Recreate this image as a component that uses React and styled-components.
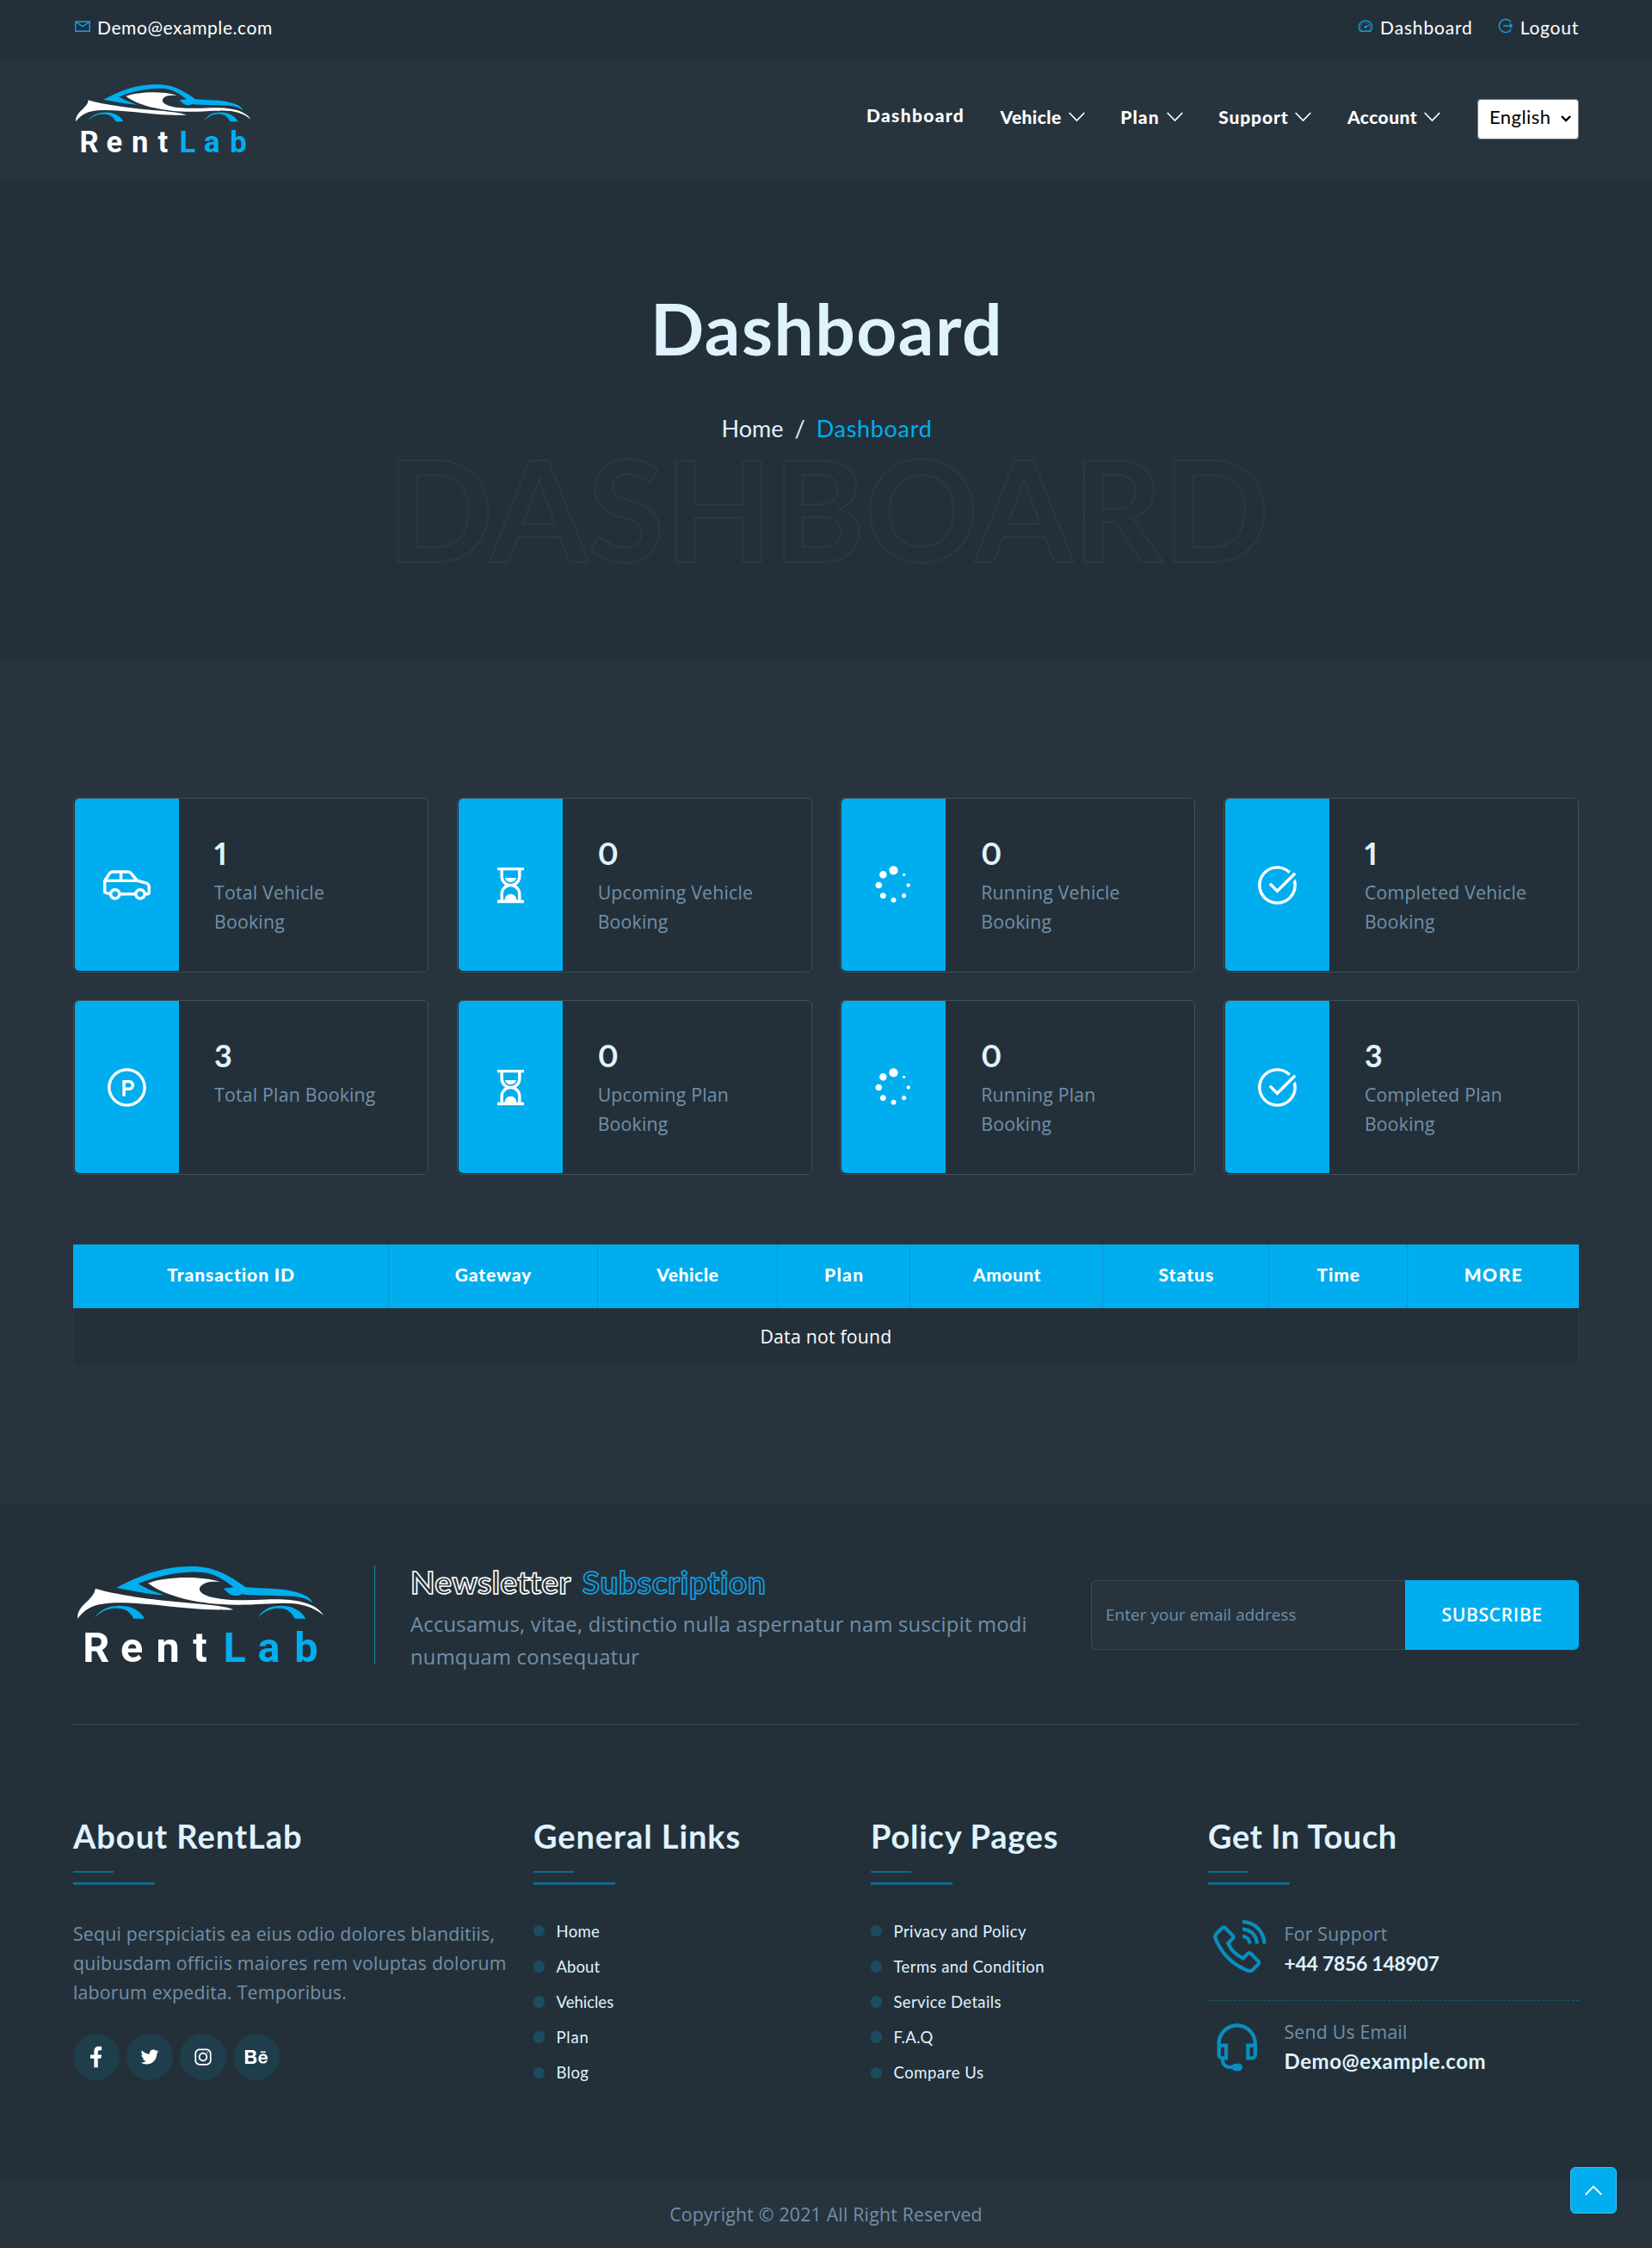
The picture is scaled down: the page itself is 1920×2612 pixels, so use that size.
import React from "react";
import styled, { createGlobalStyle } from "styled-components";
import {
  LiaBehance,
  LiaCarSideSolid,
  LiaCheckCircle,
  LiaEnvelope,
  LiaFacebookF,
  LiaHeadsetSolid,
  LiaHourglassHalfSolid,
  LiaInstagram,
  LiaPhoneVolumeSolid,
  LiaProductHunt,
  LiaSignOutAltSolid,
  LiaSpinnerSolid,
  LiaTachometerAltSolid,
  LiaTwitter,
} from "react-icons/lia";

const c = {
  dark: "#243039",
  light: "#28343d",
  blue: "#00aeef",
  heading: "#dff3ff",
  body: "#7190aa",
  line: "#3c4a53",
};

const headingFont = `Lato, "Open Sans", sans-serif`;
const bodyFont = `"Open Sans", "Noto Sans", sans-serif`;

const GlobalStyle = createGlobalStyle`
  *, *::before, *::after { box-sizing: border-box; }
  body {
    margin: 0;
    background: ${c.light};
    color: ${c.body};
    font: 400 21.25px/34px ${bodyFont};
    letter-spacing: 0.22px;
  }
  a { color: inherit; text-decoration: none; }
  ul { list-style: none; margin: 0; padding: 0; }
  h1, h2, h3, p { margin: 0; }
  svg { display: block; flex: none; }
`;

const Page = styled.div`
  position: relative;
  width: 1920px;
  height: 2612px;
  overflow: hidden;
`;

const Container = styled.div`
  width: 1750px;
  margin: 0 auto;
`;

/* ---------- Top bar ---------- */

const TopBar = styled.div`
  height: 69px;
  background: ${c.dark};
`;

const TopBarInner = styled(Container)`
  display: flex;
  justify-content: space-between;
  align-items: center;
  height: 100%;
  padding-bottom: 5px;
`;

const TopLinks = styled.div`
  display: flex;
  gap: 27px;
`;

const TopLink = styled.a`
  display: flex;
  align-items: center;
  gap: 6px;
  color: #fff;
  font: 400 21px/30px ${headingFont};
  letter-spacing: ${(p) => p.$spacing}px;

  svg {
    width: 22px;
    height: 22px;
    margin-top: -5px;
    color: #0fa3ea;
  }
`;

/* ---------- Header ---------- */

const Header = styled.header`
  height: 138px;
  background: ${c.light};
`;

const HeaderInner = styled(Container)`
  display: flex;
  align-items: center;
  height: 100%;
`;

const Brand = styled.a`
  margin-left: 3px;
`;

const Nav = styled.nav`
  display: flex;
  align-items: center;
  gap: 41.5px;
  margin: 0 43px 0 auto;
`;

const NavItem = styled.a`
  display: flex;
  align-items: center;
  gap: 8px;
  padding-bottom: ${(p) => (p.$menu ? 4 : 8)}px;
  color: #fff;
  font: 900 21px/30px ${headingFont};
  letter-spacing: ${(p) => p.$spacing}px;
`;

const LanguageSelect = styled.button`
  display: flex;
  align-items: center;
  justify-content: space-between;
  width: 118px;
  height: 47px;
  padding: 0 8px 4px 13px;
  border: 1px solid #767676;
  border-radius: 4px;
  background: #fff;
  color: #000;
  font: 400 22px/30px ${headingFont};
  letter-spacing: 0.45px;

  svg { margin-top: 4px; }
`;

/* ---------- Hero ---------- */

const Hero = styled.section`
  height: 558px;
  padding-top: 123.5px;
  background: ${c.dark};
  text-align: center;
`;

const HeroTitle = styled.h1`
  padding-left: 2px;
  color: ${c.heading};
  font: 700 82px/100px ${headingFont};
  letter-spacing: 1.5px;
`;

const Breadcrumb = styled.div`
  display: flex;
  justify-content: center;
  gap: 13px;
  margin-top: 50px;
  padding-left: 2px;
  color: ${c.heading};
  font: 400 27px/34px ${headingFont};
`;

const Crumb = styled.span`
  color: ${(p) => (p.$current ? c.blue : "inherit")};
  letter-spacing: ${(p) => (p.$current ? 0.7 : 0)}px;
`;

const HeroGhost = styled.div`
  margin: -6px 0 0 5px;
  color: transparent;
  font: 700 163px/163px ${headingFont};
  letter-spacing: 0;
  text-transform: uppercase;
  -webkit-text-stroke: 1.8px #2c3942;
`;

/* ---------- Dashboard ---------- */

const Content = styled.main`
  height: 984px;
  padding-top: 162px;
  background: ${c.light};
`;

const StatGrid = styled.div`
  display: grid;
  grid-template-columns: repeat(4, 1fr);
  grid-auto-rows: 203px;
  gap: 32px 32.5px;
`;

const StatCard = styled.div`
  display: flex;
  padding: 0 0 1px 1px;
  border: 1px solid #434f58;
  border-radius: 6px;
  background: ${c.dark};
`;

const StatIcon = styled.div`
  display: flex;
  flex: none;
  align-items: center;
  justify-content: center;
  width: 121px;
  border-radius: 5px 0 0 5px;
  background: ${c.blue};
  color: #fff;

  svg {
    width: 55px;
    height: 55px;
  }
`;

const StatText = styled.div`
  width: 242px;
  padding: 43px 0 0 41px;
`;

const StatValue = styled.div`
  color: ${c.heading};
  font: 700 36px/40px ${headingFont};
  font-variant-numeric: proportional-nums;
`;

const StatLabel = styled.div`
  margin-top: 9px;
`;

const Table = styled.div`
  margin-top: 81px;
`;

const TableHead = styled.div`
  display: grid;
  grid-template-columns: 367.3fr 242.3fr 209.4fr 154.4fr 224fr 193fr 160.6fr 199fr;
  height: 74px;
  background: ${c.blue};
`;

const HeadCell = styled.div`
  display: flex;
  align-items: center;
  justify-content: center;
  padding: 0 0 4px 1px;
  border-right: 1px solid #0597d2;
  color: #fff;
  font: 900 21px/30px ${headingFont};
  letter-spacing: ${(p) => p.$spacing}px;

  &:last-child { border-right: 0; }
`;

const EmptyRow = styled.div`
  display: flex;
  align-items: center;
  justify-content: center;
  height: 67px;
  border: solid #2b3943;
  border-width: 0 1px 1px;
  background: ${c.dark};
  color: #fff;
`;

/* ---------- Footer ---------- */

const Footer = styled.footer`
  height: 785px;
  padding-top: 70px;
  background: ${c.dark};
`;

const Newsletter = styled.div`
  display: flex;
  align-items: flex-start;
  height: 185px;
  border-bottom: 1px solid ${c.line};
`;

const FooterLogo = styled.div`
  width: 351px;
  height: 114px;
  padding: 1px 0 0 5px;
  border-right: 1px solid #138cbe;
`;

const NewsletterText = styled.div`
  width: 725px;
  margin: -3px 0 0 41px;
`;

const NewsletterTitle = styled.h2`
  display: flex;
  gap: 13px;
  color: transparent;
  font: 700 37px/44px ${headingFont};
`;

const Outline = styled.span`
  letter-spacing: ${(p) => p.$spacing}px;
  -webkit-text-stroke: 1.6px ${(p) => p.$color};
`;

const NewsletterCopy = styled.p`
  margin-top: 8px;
  font-size: 23.75px;
  line-height: 38px;
  letter-spacing: 0.25px;
`;

const SubscribeForm = styled.div`
  display: flex;
  width: 567px;
  height: 81px;
  margin: 17px 0 0 auto;
`;

const EmailField = styled.div`
  display: flex;
  flex: 1;
  align-items: center;
  padding: 0 0 2px 16px;
  border: 1px solid ${c.line};
  border-right: 0;
  border-radius: 6px 0 0 6px;
  background: ${c.light};
  font-size: 18.75px;
  letter-spacing: 0.13px;
`;

const SubscribeButton = styled.button`
  width: 202px;
  padding: 0 0 2px;
  border: 0;
  border-radius: 0 6px 6px 0;
  background: ${c.blue};
  color: #fff;
  font: 600 21.25px/34px ${bodyFont};
  letter-spacing: 0.5px;
`;

const FooterColumns = styled.div`
  display: grid;
  grid-template-columns: 535px 392px 392px 431px;
  padding-top: 106px;
`;

const ColumnTitle = styled.h3`
  color: ${c.heading};
  font: 700 38px/46px ${headingFont};
  letter-spacing: ${(p) => p.$spacing}px;
`;

const TitleRule = styled.div`
  width: 95px;
  height: 16px;
  margin-top: 18px;
  border-bottom: 3px solid #146689;

  &::before {
    content: "";
    display: block;
    width: 47px;
    height: 2px;
    background: #146689;
  }
`;

const AboutCopy = styled.p`
  width: 515px;
  margin-top: 40px;
`;

const Socials = styled.div`
  display: flex;
  gap: 8px;
  margin-top: 31px;
`;

const Social = styled.a`
  display: flex;
  align-items: center;
  justify-content: center;
  width: 54px;
  height: 54px;
  border-radius: 50%;
  background: #1f3e4c;
  color: #fff;

  svg {
    width: 28px;
    height: 28px;
  }
`;

const LinkList = styled.ul`
  margin-top: 33px;
`;

const LinkItem = styled.li`
  display: flex;
  align-items: center;
  gap: 13.5px;
  height: 41.2px;
  color: ${c.heading};
  font: 400 18.5px/30px ${headingFont};
  letter-spacing: ${(p) => p.$spacing}px;

  &::before {
    content: "";
    width: 13px;
    height: 13.5px;
    border-radius: 6px;
    background: #1b4c60;
  }
`;

const Contact = styled.div`
  display: flex;
  gap: 21px;
  padding: ${(p) => (p.$first ? "0 0 25px" : "19px 0 0")};
  margin-top: ${(p) => (p.$first ? 40 : 0)}px;
  border-bottom: ${(p) => (p.$first ? "1px dashed #1b5870" : "0")};

  svg {
    width: 67.5px;
    height: 67.5px;
    margin-top: 1px;
    color: #098ebf;
  }
`;

const ContactValue = styled.div`
  color: ${c.heading};
  font: 700 ${(p) => p.$size}px/34px ${headingFont};
  letter-spacing: ${(p) => p.$spacing}px;
`;

const Copyright = styled.div`
  display: flex;
  align-items: center;
  justify-content: center;
  height: 78px;
  background: ${c.light};
`;

const BackToTop = styled.a`
  position: absolute;
  right: 41px;
  bottom: 40px;
  display: flex;
  align-items: center;
  justify-content: center;
  width: 54px;
  height: 54px;
  border: 1px solid #3fc3f5;
  border-radius: 6px;
  background: ${c.blue};
`;

/* ---------- Drawings ---------- */

const LogoWord = styled.text`
  font: 700 34.5px Roboto, sans-serif;
  letter-spacing: 0;
`;

function Logo({ width }) {
  return (
    <svg width={width} height={(width * 80) / 204} viewBox="0 0 204 80" overflow="visible">
      <g fill={c.blue}>
        <path d="M32.2 17.7C49 9 68 0 94.3 0C115 0 127 9 139.2 17.2C150 18.4 160 17.8 169 19C182 20.8 192 24 194.3 29.9C189 26.5 184 25 178 24.7C165 24 152 24 139 23.4C137 23 136 22.6 134.5 23.4C130 25.4 126 23.5 124 21.5C122.8 20.3 121.8 19.4 120.4 18.3L129 17.2C122 12 117 8.5 110 6.2C95 2.5 72 5.8 50.2 14.3C56 18 63 21 71.8 23.7C58 23 45 20 32.2 17.7Z" />
        <path d="M14.3 42.7C19 35 27 32.4 36 32.6C46 33 52 37 55.5 43.2L46.5 43.2C43 36 37 34.2 31 34.5C24 35 18.5 38 14.3 42.7Z" />
        <path d="M149 42.7C153.5 35 160 32.4 169 32.6C179 33 185 37 188.6 43.2L179.5 43.2C176 36 171 34.2 165 34.5C158.5 35 153 38 149 42.7Z" />
      </g>
      <g fill="#fff">
        <path d="M58.4 13.8C73 8.6 100 7.5 118 12.8C113 12.4 109 12.7 106 13.6C99 16.5 98.5 21.5 108.6 24.9C120 28.2 138 28.3 156 27.3C178 26.3 197 29.5 203.3 40.5C195 33.5 185 30.3 170 30.4C158 30.6 148 31.7 133 31.8C105 31.8 74 26 58.4 13.8Z" />
        <path d="M14.7 18.3C32 23.5 60 27.5 90 30C108 31.5 122 32.8 129 35.7C112 36.4 88 34.5 70 32.3C48 30 30 28.8 18 31.5C9 33.5 4 38 0.2 43.2C-0.5 37 4 32.5 8 29C12 25 14.5 22 14.7 18.3Z" />
      </g>
      <LogoWord x="4.5 35.5 65 95.5" y="78.7" fill="#fff">Rent</LogoWord>
      <LogoWord x="120.5 149 179.3" y="78.7" fill={c.blue}>Lab</LogoWord>
    </svg>
  );
}

const ChevronDown = () => (
  <svg width="19" height="12" viewBox="0 0 19 12" fill="none" stroke="#fff" strokeWidth="1.7">
    <path d="M0.7 1L9.5 10L18.3 1" />
  </svg>
);

const SelectArrow = () => (
  <svg width="12" height="8" viewBox="0 0 12 8" fill="none" stroke="#000" strokeWidth="2.3">
    <path d="M0.9 1L6 6.1L11.1 1" />
  </svg>
);

const ChevronUp = () => (
  <svg width="20" height="12" viewBox="0 0 20 12" fill="none" stroke="#fff" strokeWidth="1.8">
    <path d="M0.7 11L10 1.5L19.3 11" />
  </svg>
);

/* ---------- Data ---------- */

const navItems = [
  { label: "Dashboard", spacing: 1.3 },
  { label: "Vehicle", spacing: 0.4, menu: true },
  { label: "Plan", spacing: 1.1, menu: true },
  { label: "Support", spacing: 0.85, menu: true },
  { label: "Account", spacing: 0.42, menu: true },
];

const stats = [
  { icon: LiaCarSideSolid, value: 1, label: "Total Vehicle Booking" },
  { icon: LiaHourglassHalfSolid, value: 0, label: "Upcoming Vehicle Booking" },
  { icon: LiaSpinnerSolid, value: 0, label: "Running Vehicle Booking" },
  { icon: LiaCheckCircle, value: 1, label: "Completed Vehicle Booking" },
  { icon: LiaProductHunt, value: 3, label: "Total Plan Booking" },
  { icon: LiaHourglassHalfSolid, value: 0, label: "Upcoming Plan Booking" },
  { icon: LiaSpinnerSolid, value: 0, label: "Running Plan Booking" },
  { icon: LiaCheckCircle, value: 3, label: "Completed Plan Booking" },
];

const tableHead = [
  ["Transaction ID", 0.9],
  ["Gateway", 0.9],
  ["Vehicle", 0.5],
  ["Plan", 1.3],
  ["Amount", 0.45],
  ["Status", 1],
  ["Time", 0.8],
  ["MORE", 1.5],
];

const generalLinks = [
  ["Home", 0.29],
  ["About", 0.09],
  ["Vehicles", 0],
  ["Plan", 0.8],
  ["Blog", 0.37],
];

const policyLinks = [
  ["Privacy and Policy", 0.46],
  ["Terms and Condition", 0.42],
  ["Service Details", 0.36],
  ["F.A.Q", 0.37],
  ["Compare Us", 0.56],
];

const socials = [LiaFacebookF, LiaTwitter, LiaInstagram, LiaBehance];

function FooterLinks({ title, spacing, links }) {
  return (
    <div>
      <ColumnTitle $spacing={spacing}>{title}</ColumnTitle>
      <TitleRule />
      <LinkList>
        {links.map(([label, ls]) => (
          <LinkItem key={label} $spacing={ls}>
            <a href="#">{label}</a>
          </LinkItem>
        ))}
      </LinkList>
    </div>
  );
}

export default function App() {
  return (
    <Page>
      <GlobalStyle />

      <TopBar>
        <TopBarInner>
          <TopLink href="#" $spacing={0.58}>
            <LiaEnvelope />
            Demo@example.com
          </TopLink>
          <TopLinks>
            <TopLink href="#" $spacing={0.84}>
              <LiaTachometerAltSolid />
              Dashboard
            </TopLink>
            <TopLink href="#" $spacing={0.75}>
              <LiaSignOutAltSolid />
              Logout
            </TopLink>
          </TopLinks>
        </TopBarInner>
      </TopBar>

      <Header>
        <HeaderInner>
          <Brand href="#">
            <Logo width={204} />
          </Brand>
          <Nav>
            {navItems.map((item) => (
              <NavItem key={item.label} href="#" $menu={item.menu} $spacing={item.spacing}>
                {item.label}
                {item.menu && <ChevronDown />}
              </NavItem>
            ))}
          </Nav>
          <LanguageSelect>
            English
            <SelectArrow />
          </LanguageSelect>
        </HeaderInner>
      </Header>

      <Hero>
        <HeroTitle>Dashboard</HeroTitle>
        <Breadcrumb>
          <Crumb>Home</Crumb>
          <Crumb>/</Crumb>
          <Crumb $current>Dashboard</Crumb>
        </Breadcrumb>
        <HeroGhost>Dashboard</HeroGhost>
      </Hero>

      <Content>
        <Container>
          <StatGrid>
            {stats.map(({ icon: Icon, value, label }) => (
              <StatCard key={label}>
                <StatIcon>
                  <Icon />
                </StatIcon>
                <StatText>
                  <StatValue>{value}</StatValue>
                  <StatLabel>{label}</StatLabel>
                </StatText>
              </StatCard>
            ))}
          </StatGrid>
          <Table>
            <TableHead>
              {tableHead.map(([label, ls]) => (
                <HeadCell key={label} $spacing={ls}>
                  {label}
                </HeadCell>
              ))}
            </TableHead>
            <EmptyRow>Data not found</EmptyRow>
          </Table>
        </Container>
      </Content>

      <Footer>
        <Container>
          <Newsletter>
            <FooterLogo>
              <Logo width={287} />
            </FooterLogo>
            <NewsletterText>
              <NewsletterTitle>
                <Outline $color="#fff" $spacing={0.38}>Newsletter</Outline>
                <Outline $color="#0fa3ea" $spacing={0.73}>Subscription</Outline>
              </NewsletterTitle>
              <NewsletterCopy>
                Accusamus, vitae, distinctio nulla aspernatur nam suscipit modi numquam consequatur
              </NewsletterCopy>
            </NewsletterText>
            <SubscribeForm>
              <EmailField>Enter your email address</EmailField>
              <SubscribeButton>SUBSCRIBE</SubscribeButton>
            </SubscribeForm>
          </Newsletter>

          <FooterColumns>
            <div>
              <ColumnTitle $spacing={0.97}>About RentLab</ColumnTitle>
              <TitleRule />
              <AboutCopy>
                Sequi perspiciatis ea eius odio dolores blanditiis, quibusdam officiis maiores rem
                voluptas dolorum laborum expedita. Temporibus.
              </AboutCopy>
              <Socials>
                {socials.map((Icon, i) => (
                  <Social key={i} href="#">
                    <Icon />
                  </Social>
                ))}
              </Socials>
            </div>
            <FooterLinks title="General Links" spacing={0.93} links={generalLinks} />
            <FooterLinks title="Policy Pages" spacing={0.76} links={policyLinks} />
            <div>
              <ColumnTitle $spacing={0.61}>Get In Touch</ColumnTitle>
              <TitleRule />
              <Contact $first>
                <LiaPhoneVolumeSolid />
                <div>
                  <div>For Support</div>
                  <ContactValue $size={23} $spacing={-0.3}>+44 7856 148907</ContactValue>
                </div>
              </Contact>
              <Contact>
                <LiaHeadsetSolid />
                <div>
                  <div>Send Us Email</div>
                  <ContactValue $size={24} $spacing={0.55}>Demo@example.com</ContactValue>
                </div>
              </Contact>
            </div>
          </FooterColumns>
        </Container>
      </Footer>

      <Copyright>Copyright © 2021 All Right Reserved</Copyright>

      <BackToTop href="#">
        <ChevronUp />
      </BackToTop>
    </Page>
  );
}
